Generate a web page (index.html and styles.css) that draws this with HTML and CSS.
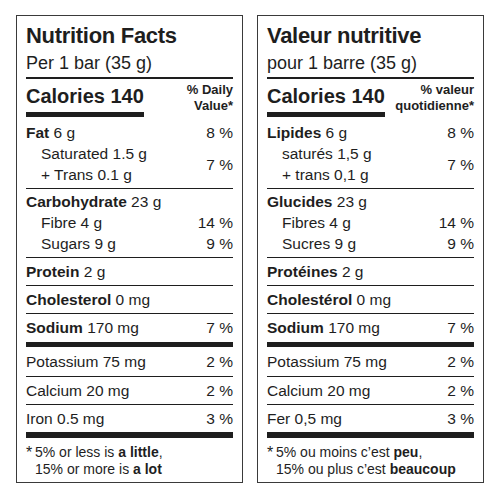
FILE: index.html
```html
<!DOCTYPE html>
<html lang="en">
<head>
    <meta charset="UTF-8">
    <meta name="viewport" content="width=device-width, initial-scale=1.0">
    <title>Nutrition Facts / Valeur nutritive</title>
    <link rel="stylesheet" href="styles.css">
</head>
<body>
    <div class="labels">
        <!-- English label -->
        <section class="panel">
            <h1 class="title">Nutrition Facts</h1>
            <p class="serving">Per 1 bar (35 g)</p>

            <div class="cal-row">
                <div class="cal">
                    <div>Calories 140</div>
                    <div class="cal-bar"></div>
                </div>
                <div class="dv">% Daily<br>Value*</div>
            </div>

            <div class="group group-fat">
                <div class="line"><span><b>Fat</b> 6 g</span><span>8 %</span></div>
                <div class="pair">
                    <div class="sub">
                        <div>Saturated 1.5 g</div>
                        <div>+ Trans 0.1 g</div>
                    </div>
                    <span>7 %</span>
                </div>
            </div>

            <div class="group group-carb">
                <div class="line"><span><b>Carbohydrate</b> 23 g</span></div>
                <div class="line sub"><span>Fibre 4 g</span><span>14 %</span></div>
                <div class="line sub"><span>Sugars 9 g</span><span>9 %</span></div>
            </div>

            <div class="row"><span><b>Protein</b> 2 g</span></div>
            <div class="row"><span><b>Cholesterol</b> 0 mg</span></div>
            <div class="row row-sodium"><span><b>Sodium</b> 170 mg</span><span>7 %</span></div>
            <div class="row row-thick"><span>Potassium 75 mg</span><span>2 %</span></div>
            <div class="row"><span>Calcium 20 mg</span><span>2 %</span></div>
            <div class="row"><span>Iron 0.5 mg</span><span>3 %</span></div>

            <div class="note">
                <span class="star">*</span>
                <p>5% or less is <b>a little</b>,<br>15% or more is <b>a lot</b></p>
            </div>
        </section>

        <!-- French label -->
        <section class="panel" lang="fr">
            <h1 class="title">Valeur nutritive</h1>
            <p class="serving">pour 1 barre (35 g)</p>

            <div class="cal-row">
                <div class="cal">
                    <div>Calories 140</div>
                    <div class="cal-bar"></div>
                </div>
                <div class="dv">% valeur<br>quotidienne*</div>
            </div>

            <div class="group group-fat">
                <div class="line"><span><b>Lipides</b> 6 g</span><span>8 %</span></div>
                <div class="pair">
                    <div class="sub">
                        <div>saturés 1,5 g</div>
                        <div>+ trans 0,1 g</div>
                    </div>
                    <span>7 %</span>
                </div>
            </div>

            <div class="group group-carb">
                <div class="line"><span><b>Glucides</b> 23 g</span></div>
                <div class="line sub"><span>Fibres 4 g</span><span>14 %</span></div>
                <div class="line sub"><span>Sucres 9 g</span><span>9 %</span></div>
            </div>

            <div class="row"><span><b>Protéines</b> 2 g</span></div>
            <div class="row"><span><b>Cholestérol</b> 0 mg</span></div>
            <div class="row row-sodium"><span><b>Sodium</b> 170 mg</span><span>7 %</span></div>
            <div class="row row-thick"><span>Potassium 75 mg</span><span>2 %</span></div>
            <div class="row"><span>Calcium 20 mg</span><span>2 %</span></div>
            <div class="row"><span>Fer 0,5 mg</span><span>3 %</span></div>

            <div class="note">
                <span class="star">*</span>
                <p>5% ou moins c’est <b>peu</b>,<br>15% ou plus c’est <b>beaucoup</b></p>
            </div>
        </section>
    </div>
</body>
</html>
```

FILE: styles.css
```css
:root {
    --ink: #1e1e1e;
    --frame: #3a3a3a;
}

* {
    margin: 0;
    padding: 0;
    box-sizing: border-box;
}

body {
    background: #fff;
    color: var(--ink);
    font-family: 'Liberation Sans', Arial, sans-serif;
}

.labels {
    display: flex;
    gap: 14px;
    padding: 15px 0 0 16px;
}

.panel {
    width: 227px;
    border: 1px solid var(--frame);
    padding: 8px 9px 0;
}

.title {
    font-size: 22px;
    line-height: 24px;
    font-weight: bold;
    letter-spacing: -0.3px;
}

.serving {
    margin-top: 4px;
    font-size: 18px;
    line-height: 22px;
}

/* calories + % daily value header */
.cal-row {
    display: flex;
    justify-content: space-between;
    align-items: flex-start;
    margin-top: 3px;
    border-top: 2px solid var(--ink);
}

.cal {
    padding-top: 5px;
    font-size: 20px;
    line-height: 24px;
    font-weight: bold;
}

.cal-bar {
    height: 5px;
    margin-top: 4px;
    background: var(--ink);
}

.dv {
    padding-top: 3px;
    font-size: 13px;
    line-height: 16px;
    font-weight: bold;
    text-align: right;
}

/* nutrient rows */
.group,
.row {
    font-size: 15.5px;
    line-height: 21px;
    border-top: 1px solid var(--ink);
    padding: 3px 0;
}

.row {
    display: flex;
    justify-content: space-between;
}

.group-fat {
    border-top: none;
    padding: 5px 0 3px;
}

.group-carb {
    padding: 2px 0 3px;
}

.line {
    display: flex;
    justify-content: space-between;
}

.pair {
    display: flex;
    justify-content: space-between;
    align-items: center;
}

.sub {
    padding-left: 15px;
}

.row-sodium {
    padding-bottom: 4px;
}

.row-thick {
    border-top-width: 5px;
    padding: 4px 0;
}

/* footnote */
.note {
    display: flex;
    border-top: 6px solid var(--ink);
    padding: 6px 0 4px;
    font-size: 14px;
    line-height: 17px;
}

.star {
    flex: none;
    width: 9px;
    font-size: 16px;
}
```
